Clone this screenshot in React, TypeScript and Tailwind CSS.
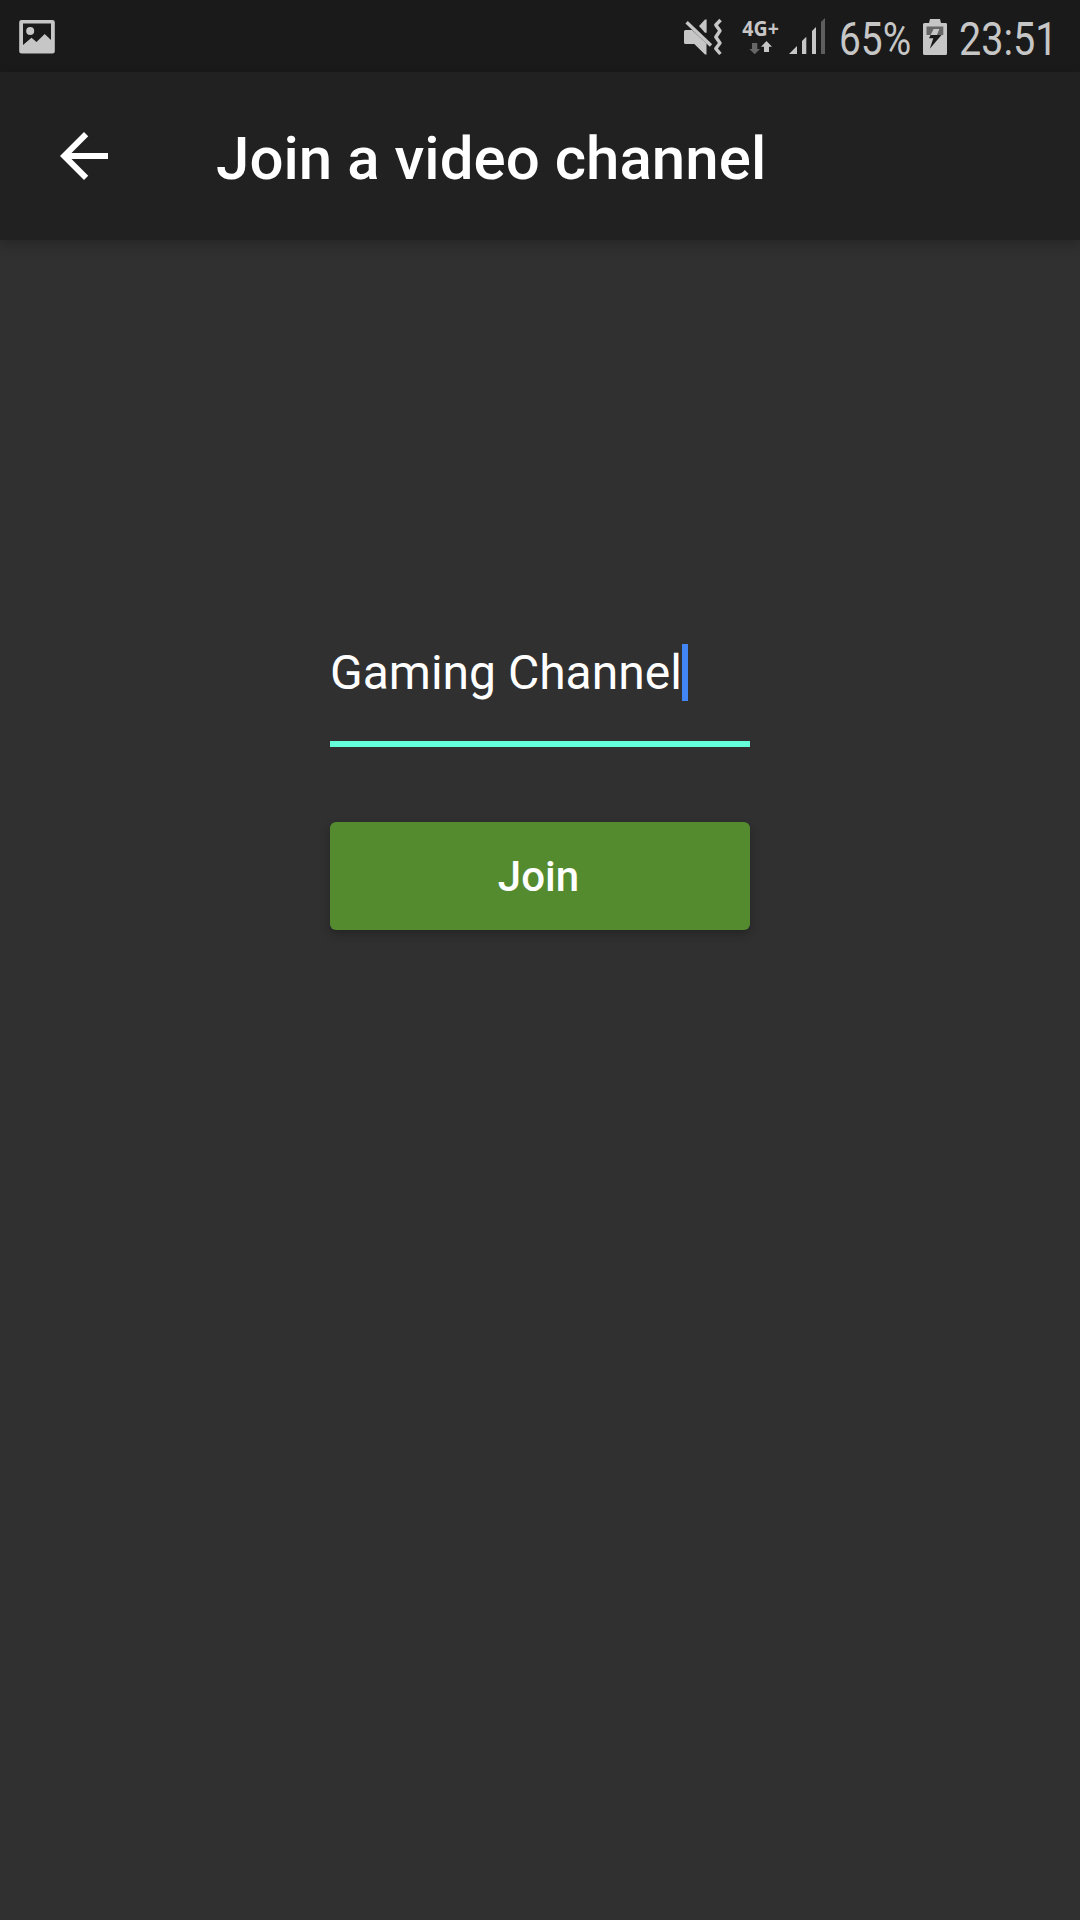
import React from "react";

function PictureIcon() {
  return (
    <svg className="h-9 w-9" viewBox="19 19 36 36" fill="#c6c6c6">
      <path
        fillRule="evenodd"
        d="M21.5 20H52.5A2.3 2.3 0 0 1 54.8 22.3V51A2.5 2.5 0 0 1 52.3 53.5H21.7A2.5 2.5 0 0 1 19.2 51V22.3A2.3 2.3 0 0 1 21.5 20ZM23 23.5V45L31.5 37.7L36.5 42L44.7 34L51 40V23.5Z"
      />
      <circle cx="30.2" cy="31" r="4" />
    </svg>
  );
}

function MutedIcon() {
  return (
    <svg className="h-10 w-[42px]" viewBox="682 18 42 40" fill="#c6c6c6">
      <path d="M685.5 30H692L706.5 43.5V54.5H705L694.3 44H685.5A1.5 1.5 0 0 1 684 42.5V31.5A1.5 1.5 0 0 1 685.5 30Z" />
      <path d="M699 26L705 19.6H706.6V32.7H705Z" />
      <path d="M686.6 22.2L711 45.6" fill="none" stroke="#c6c6c6" strokeWidth="3.4" />
      <path
        d="M720.6 20L715.8 25L720 30.8L715.8 37L720 43L715.8 48.6L720.4 54"
        fill="none"
        stroke="#c6c6c6"
        strokeWidth="3.4"
        strokeLinejoin="round"
      />
    </svg>
  );
}

function DataArrows() {
  return (
    <svg className="h-[14px] w-6" viewBox="749 41 24 14">
      <path d="M752 43H757.3V49H760L754.7 54.3L749.3 49H752Z" fill="#666" />
      <path d="M764 52H769V46.7H772L766.5 41L761 46.7H764Z" fill="#c6c6c6" />
    </svg>
  );
}

function SignalIcon() {
  return (
    <svg className="h-9 w-9" viewBox="789 18 36 36" fill="#c6c6c6">
      <path d="M789 54L797 46V54Z" />
      <path d="M802 54V41L806.3 36.7V54Z" />
      <path d="M812 54V31L816 27V54Z" />
      <path d="M821 54V22L825 18V54Z" fill="#5e5e5e" />
    </svg>
  );
}

function BatteryIcon() {
  return (
    <svg className="h-9 w-6" viewBox="923 19 24 36">
      <path d="M929 23L930 19H940L941 23H945.5A1.5 1.5 0 0 1 947 24.5V53.5A1.5 1.5 0 0 1 945.5 55H924.5A1.5 1.5 0 0 1 923 53.5V24.5A1.5 1.5 0 0 1 924.5 23Z" fill="#c6c6c6" />
      <path d="M926.5 26.5H943.3V35H926.5Z" fill="#666" />
      <path d="M933.5 29H939.5L937 35H941.5L929.8 48.8L933.3 38.2H929Z" fill="#1a1a1a" />
      <path d="M933.5 29H939.5L937 35H930.5Z" fill="#c6c6c6" />
    </svg>
  );
}

function StatusBar() {
  return (
    <header className="flex h-[72px] items-start bg-[#1a1a1a] pt-[18px] pr-[26px] pl-[19px] text-[#c6c6c6]">
      <div className="mt-px">
        <PictureIcon />
      </div>
      <div className="ml-auto flex items-start">
        <MutedIcon />
        <div className="ml-[17px] flex w-[40px] flex-col items-center">
          <span className="-mt-px h-6 scale-x-[0.93] font-['Open_Sans',sans-serif] text-[21px] leading-[22px] font-bold whitespace-nowrap">4G+</span>
          <DataArrows />
        </div>
        <div className="ml-2">
          <SignalIcon />
        </div>
        <div className="ml-[14px] w-[73px]">
          <span className="mt-px block w-max origin-left scale-x-[0.845] text-[46px] leading-[40px]">65%</span>
        </div>
        <div className="mt-px ml-[11px]">
          <BatteryIcon />
        </div>
        <div className="ml-3 w-[95px]">
          <span className="mt-px block w-max origin-left scale-x-[0.86] text-[46px] leading-[40px]">23:51</span>
        </div>
      </div>
    </header>
  );
}

function AppBar() {
  return (
    <div className="flex h-[168px] items-center bg-[#212121] pl-12 text-white shadow-[0_4px_12px_rgba(0,0,0,0.22)]">
      <button className="h-[72px] w-[72px]" aria-label="Back">
        <svg className="h-[72px] w-[72px]" viewBox="0 0 24 24" fill="white">
          <path d="M20 11H7.83l5.59-5.59L12 4l-8 8 8 8 1.41-1.41L7.83 13H20v-2z" />
        </svg>
      </button>
      <h1 className="mt-[5px] ml-24 text-[60px] leading-[70px] font-medium tracking-[0.04px] whitespace-nowrap">Join a video channel</h1>
    </div>
  );
}

export default function App() {
  return (
    <div className="flex h-[1920px] w-[1080px] flex-col overflow-hidden bg-[#303030] font-['Roboto',sans-serif]">
      <StatusBar />
      <AppBar />
      <main className="mx-auto flex w-[420px] flex-col pt-[404px]">
        <div className="flex h-[103px] items-start border-b-6 border-[#64ffda]">
          <span className="text-[48px] leading-[57px] whitespace-nowrap text-white">Gaming Channel</span>
          <span className="h-[57px] w-1.5 shrink-0 bg-[#4285f4]" />
        </div>
        <button className="mt-[75px] h-[108px] rounded-md bg-[#558b2f] pr-[3px] text-[42px] font-medium text-white shadow-[0_4px_8px_rgba(0,0,0,0.25)]">
          Join
        </button>
      </main>
    </div>
  );
}
